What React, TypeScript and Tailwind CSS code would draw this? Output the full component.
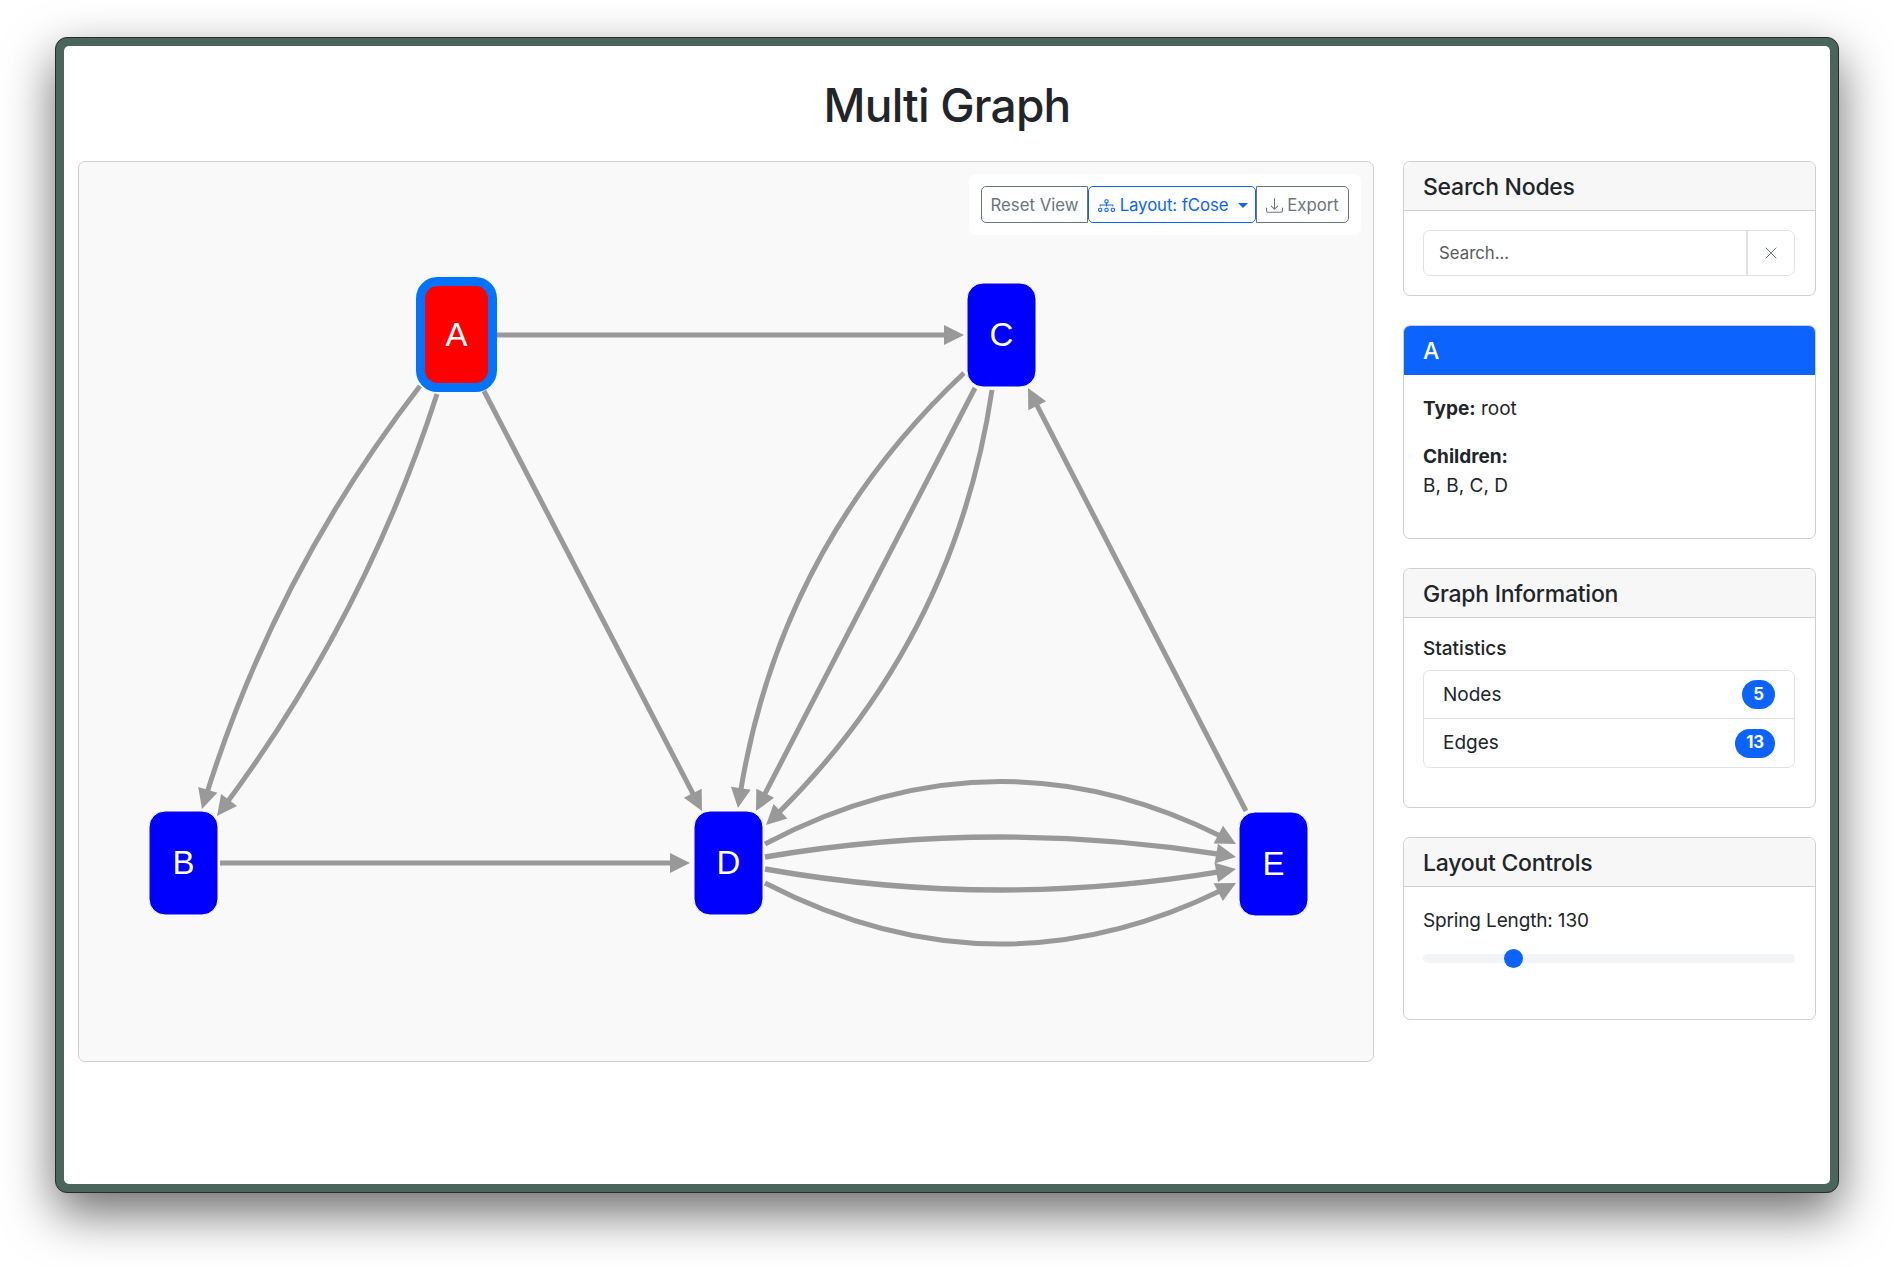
import React from 'react';
import { BsDiagram3, BsDownload } from 'react-icons/bs';
import { X } from 'lucide-react';

type Pt = [number, number];
type Edge = { from: Pt; to: Pt; ctrl?: Pt; width?: number };

// page coordinates, the svg viewBox starts at the panel's inner corner
const edges: Edge[] = [
  { from: [497, 335], to: [964, 335] },
  { from: [484, 391], to: [702, 811] },
  { from: [420, 386], to: [202, 809], ctrl: [272, 577] },
  { from: [437, 394], to: [217, 816], ctrl: [363, 623] },
  { from: [220, 863], to: [690, 863] },
  { from: [964, 373], to: [738, 808], ctrl: [775, 551] },
  { from: [975, 388], to: [756, 811] },
  { from: [992, 390], to: [766, 825], ctrl: [954, 646] },
  { from: [1246, 811], to: [1028, 388] },
  { from: [765, 844], to: [1236, 844], ctrl: [1001, 719], width: 5 },
  { from: [765, 857], to: [1236, 857], ctrl: [1001, 817], width: 5.4 },
  { from: [765, 869], to: [1236, 869], ctrl: [1001, 911], width: 5.4 },
  { from: [765, 883], to: [1236, 883], ctrl: [1001, 1005], width: 5 },
];

const nodes = [
  { label: 'B', x: 149, y: 811, w: 69, h: 104 },
  { label: 'C', x: 967, y: 283, w: 69, h: 104 },
  { label: 'D', x: 694, y: 811, w: 69, h: 104 },
  { label: 'E', x: 1239, y: 812, w: 69, h: 104 },
];

const GraphEdge = ({ edge }: { edge: Edge }) => {
  const { from, to, ctrl } = edge;
  const c = ctrl ?? [(from[0] + to[0]) / 2, (from[1] + to[1]) / 2];
  const dx = to[0] - c[0];
  const dy = to[1] - c[1];
  const d = Math.hypot(dx, dy);
  const ux = dx / d;
  const uy = dy / d;
  // stop the line inside the arrowhead
  const len = Math.hypot(to[0] - from[0], to[1] - from[1]);
  const t = 1 - 14 / len;
  const c2: Pt = [from[0] + (c[0] - from[0]) * t, from[1] + (c[1] - from[1]) * t];
  const e2: Pt = [c[0] + (to[0] - c[0]) * t, c[1] + (to[1] - c[1]) * t];
  const end: Pt = [c2[0] + (e2[0] - c2[0]) * t, c2[1] + (e2[1] - c2[1]) * t];
  const bx = to[0] - ux * 20;
  const by = to[1] - uy * 20;
  const head = `${to[0]},${to[1]} ${bx - uy * 10},${by + ux * 10} ${bx + uy * 10},${by - ux * 10}`;
  return (
    <g>
      <path
        d={`M${from[0]} ${from[1]} Q${c2[0]} ${c2[1]} ${end[0]} ${end[1]}`}
        fill="none"
        stroke="#999999"
        strokeWidth={edge.width ?? 5}
      />
      <polygon points={head} fill="#999999" />
    </g>
  );
};

const GraphCanvas = () => (
  <svg viewBox="79 162 1294 899" className="block w-full h-full">
    {edges.map((edge, index) => (
      <GraphEdge key={index} edge={edge} />
    ))}
    <rect x={420.5} y={281.5} width={72} height={106} rx={17} fill="#ff0000" stroke="#0074ff" strokeWidth={9} />
    <text x={456.5} y={346} textAnchor="middle" fontSize={33} fill="#ffffff" fontFamily="'Liberation Sans', sans-serif">
      A
    </text>
    {nodes.map((n) => (
      <g key={n.label}>
        <rect x={n.x} y={n.y} width={n.w} height={n.h} rx={16} fill="#0000ff" stroke="#ffffff" strokeWidth={1} />
        <text
          x={n.x + n.w / 2}
          y={n.y + n.h / 2 + 11}
          textAnchor="middle"
          fontSize={33}
          fill="#ffffff"
          fontFamily="'Liberation Sans', sans-serif"
        >
          {n.label}
        </text>
      </g>
    ))}
  </svg>
);

const Toolbar = () => (
  <div className="absolute top-[12px] right-[12px] flex items-center h-[61px] px-[12px] bg-white rounded-[7px] text-[16.8px] leading-none">
    <button className="h-[37px] w-[107px] pt-[1px] border border-[#6c757d] rounded-l-[5px] text-[#6c757d] flex items-center justify-center">
      Reset View
    </button>
    <button className="h-[37px] w-[168px] pt-[1px] pl-[2px] border border-[#0d63fe] rounded-[5px] text-[#0d63fe] flex items-center justify-center gap-[5px] tracking-[-0.1px]">
      <BsDiagram3 size={17} />
      <span>Layout: fCose</span>
      <span className="ml-[5px] w-0 h-0 border-x-[5px] border-x-transparent border-t-[5px] border-t-[#0d63fe]" />
    </button>
    <button className="h-[37px] w-[93px] pt-[1px] border border-[#6c757d] rounded-r-[5px] text-[#6c757d] flex items-center justify-center gap-[4px]">
      <BsDownload size={17} />
      <span>Export</span>
    </button>
  </div>
);

const Card = ({ title, primary, children }: { title: string; primary?: boolean; children: React.ReactNode }) => (
  <div className="border border-[#cfcfcf] rounded-[7px] overflow-hidden">
    <div
      className={
        primary
          ? 'h-[49px] px-[19px] pt-[1px] flex items-center bg-[#0d63fe] text-white text-[23px] font-medium tracking-[-0.25px]'
          : 'h-[49px] px-[19px] pt-[2px] flex items-center bg-[#f7f7f7] border-b border-[#cfcfcf] text-[23px] font-medium tracking-[-0.25px]'
      }
    >
      {title}
    </div>
    <div className="pt-[19px] pb-[19px] pl-[19px] pr-[20px]">{children}</div>
  </div>
);

const StatRow = ({ label, value, border }: { label: string; value: number; border?: boolean }) => (
  <div className={`h-[48px] pl-[19px] pr-[19px] flex items-center justify-between ${border ? 'border-b border-[#dee2e6]' : ''}`}>
    <span className="pt-[1px]">{label}</span>
    <span className="h-[29px] min-w-[33px] px-[11px] rounded-full bg-[#0d63fe] text-white text-[16.8px] font-bold flex items-center justify-center tracking-[-0.2px]">
      {value}
    </span>
  </div>
);

const App = () => {
  return (
    <div className="w-[1894px] h-[1267px] bg-white pt-[37px] pl-[55px] font-['Inter',sans-serif] text-[#212529] text-[19px] overflow-hidden">
      <div className="w-[1784px] h-[1156px] p-[8px] bg-[#4a665c] border border-[#2a2a2a] rounded-[12px] shadow-[0_20px_50px_rgba(0,0,0,0.58)]">
        <div className="h-full bg-white rounded-[5px] px-[14px]">
          <h1 className="h-[115px] flex items-center justify-center text-[46px] font-medium pt-[4px] tracking-[-0.8px]">Multi Graph</h1>
          <div className="flex gap-[29px] items-start">
            <div className="relative w-[1296px] h-[901px] border border-[#cfcfcf] rounded-[7px] bg-[#f9f9f9] overflow-hidden">
              <GraphCanvas />
              <Toolbar />
            </div>
            <div className="w-[413px] flex flex-col gap-[29px]">
              <Card title="Search Nodes">
                <div className="flex h-[46px] border border-[#dee2e6] rounded-[7px] text-[16.8px]">
                  <div className="flex-1 flex items-center pl-[15px] pt-[2px] text-[#595c5f]">Search...</div>
                  <div className="w-[48px] border-l-2 border-[#dee2e6] flex items-center justify-center text-[#6c757d]">
                    <X size={20} strokeWidth={1.2} />
                  </div>
                </div>
              </Card>
              <Card title="A" primary>
                <div className="h-[125px] leading-[29px]">
                  <p>
                    <strong className="font-bold">Type:</strong> root
                  </p>
                  <p className="mt-[19px] font-bold">Children:</p>
                  <p>B, B, C, D</p>
                </div>
              </Card>
              <Card title="Graph Information">
                <h6 className="leading-[23px] font-medium mb-[10px]">Statistics</h6>
                <div className="border border-[#dee2e6] rounded-[7px] mb-[20px]">
                  <StatRow label="Nodes" value={5} border />
                  <StatRow label="Edges" value={13} />
                </div>
              </Card>
              <Card title="Layout Controls">
                <div className="h-[94px]">
                  <div className="leading-[29px] tracking-[-0.15px]">Spring Length: 130</div>
                  <div className="relative mt-[19px] h-[9px] rounded-full bg-[#f3f4f6]">
                    <div className="absolute left-[81px] top-[-5px] w-[19px] h-[19px] rounded-full bg-[#0d63fe]" />
                  </div>
                </div>
              </Card>
            </div>
          </div>
        </div>
      </div>
    </div>
  );
};

export default App;
